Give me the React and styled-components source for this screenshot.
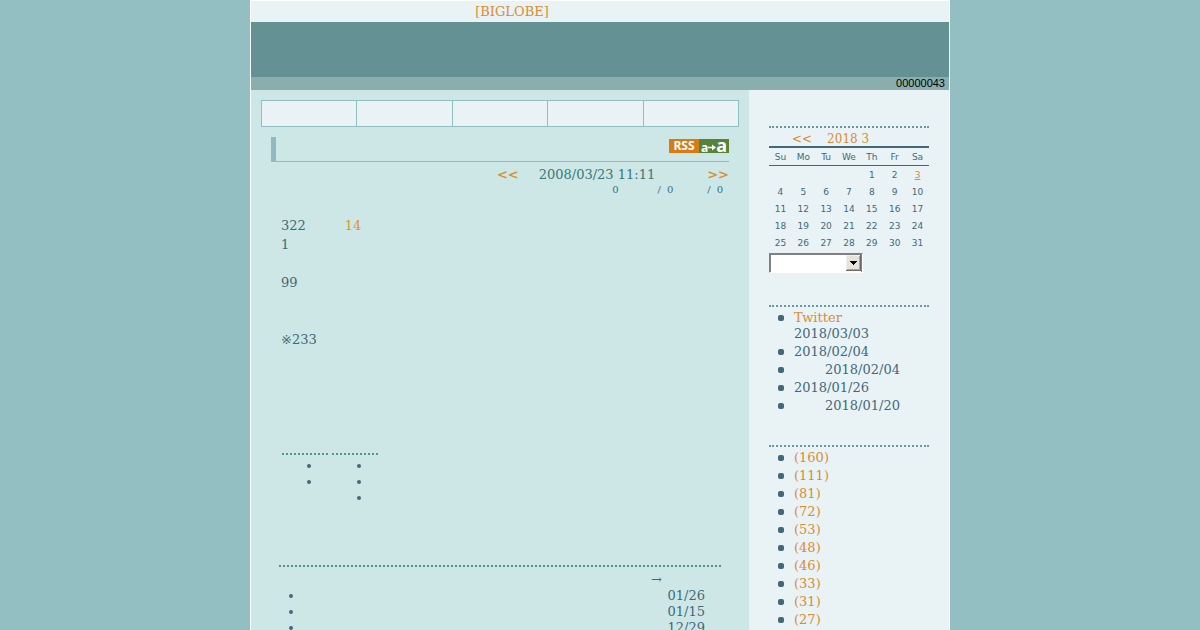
import styled, { createGlobalStyle } from 'styled-components'

const GlobalStyle = createGlobalStyle`
body {
    margin: 0;
    background: #93bfc3;
    color: #42687a;
    font-family: "DejaVu Serif", "DejaVu Sans", "Noto Sans CJK JP", serif;
    font-size: 13px;
    line-height: 16px;
}
a {
    color: #da8c30;
    text-decoration: none;
}
ul {
    margin: 0;
}
`

const Page = styled.div`
box-sizing: border-box;
max-width: 700px;
min-height: 100vh;
margin: 0 auto;
display: flex;
flex-direction: column;
border: 1px solid #fdfefe;
border-bottom: 0;
`

const TopBar = styled.div`
height: 21px;
line-height: 21px;
padding-right: 176px;
text-align: center;
background: #e9f3f6;
`

const Banner = styled.header`
height: 55px;
background: #649193;
`

const CounterBar = styled.div`
display: flex;
justify-content: flex-end;
align-items: center;
height: 13px;
padding-right: 4px;
background: #8aaeae;
`

const Counter = styled.span`
font-family: "Liberation Sans", sans-serif;
font-size: 11px;
line-height: 13px;
color: #000;
`

const Columns = styled.div`
flex: 1;
display: flex;
`

const Main = styled.main`
flex: 1;
padding: 10px;
background: #cde7e6;
`

const Side = styled.aside`
box-sizing: border-box;
width: 200px;
padding: 36px 20px 0;
background: #e9f3f6;
`

const Nav = styled.nav`
display: flex;
border: 1px solid #92bdc3;
border-left: 0;
background: #e9f3f6;
`

const NavItem = styled.a`
flex: 1;
height: 25px;
border-left: 1px solid #92bdc3;
`

const Article = styled.article`
padding: 10px 10px 0;
`

const Title = styled.div`
display: flex;
justify-content: flex-end;
height: 22px;
padding-top: 2px;
border-left: 5px solid #92b9c0;
border-bottom: 1px solid #92b9c0;
`

const Rss = styled.a`
display: flex;
width: 60px;
height: 14px;
font-family: "Open Sans", sans-serif;
font-weight: 700;
font-size: 12px;
line-height: 14px;
color: #fff;
`

const RssName = styled.span`
width: 30px;
text-align: center;
background: #d97a14;
`

const RssMode = styled.span`
flex: 1;
display: flex;
justify-content: center;
align-items: baseline;
background: #568436;
`

const Big = styled.span`
font-size: 18px;
line-height: 12px;
`

const DateLine = styled.div`
display: flex;
justify-content: flex-end;
padding-top: 5px;
color: #3c7676;
`

const Bold = styled.a`
font-weight: 700;
`

const Stamp = styled.span`
margin-left: 20px;
margin-right: 52px;
`

const Stats = styled.div`
display: flex;
justify-content: flex-end;
padding-right: 6px;
font-size: 10px;
line-height: 13px;
color: #2f7191;
`

const Stat = styled.span`
display: flex;
gap: 6px;
margin-left: ${(props) => props.$space || 0}px;
`

const Body = styled.div`
padding: 20px 10px 0;
line-height: 19px;
p {
    min-height: 19px;
    margin: 0;
}
`

const Keyword = styled.a`
margin-left: 39px;
color: #dd972a;
`

const Themes = styled.div`
display: flex;
gap: 4px;
padding: 104px 11px 0;
`

const Theme = styled.ul`
width: 6px;
padding: 3px 0 0 40px;
border-top: 2px dotted #57938f;
li {
    height: 16px;
}
`

const Related = styled.section`
margin: 59px 8px 0;
border-top: 2px dotted #57938f;
`

const More = styled.div`
padding: 5px 59px 0 0;
text-align: right;
`

const RelatedList = styled.ul`
padding: 0 16px 0 25px;
li {
    text-align: right;
}
`

const Box = styled.section`
border-top: 2px dotted #669a9d;
margin-bottom: 29px;
`

const Calendar = styled.table`
width: 100%;
table-layout: fixed;
border-collapse: collapse;
font-family: "DejaVu Sans", sans-serif;
font-size: 9px;
text-align: center;
caption {
    height: 18px;
    font-family: "DejaVu Serif", serif;
    font-size: 12px;
    line-height: 22px;
    text-align: left;
}
th {
    height: 17px;
    padding: 0;
    font-weight: 400;
    border-top: 2px solid #42687a;
    border-bottom: 1px solid #42687a;
}
td {
    height: 17px;
    padding: 0;
    line-height: 17px;
}
tbody tr:first-child td {
    padding-top: 1px;
}
td a {
    text-decoration: underline;
}
`

const Prev = styled.a`
margin-left: 23px;
margin-right: 15px;
`

const SelectWrap = styled.div`
position: relative;
width: 94px;
margin: 1px 0 32px;
`

const Select = styled.select`
appearance: none;
display: block;
box-sizing: border-box;
width: 100%;
height: 20px;
border: 1px solid;
border-color: #808080 #fff #fff #808080;
box-shadow: inset 1px 1px 0 #808080, inset -1px 0 0 #808080;
border-radius: 0;
background: #fff;
`

const Arrow = styled.svg`
position: absolute;
top: 2px;
right: 2px;
pointer-events: none;
`

const SideList = styled.ul`
padding: 3px 0 0 25px;
list-style: none;
li {
    position: relative;
    padding-bottom: 2px;
}
li::before {
    content: "";
    position: absolute;
    left: -16px;
    top: 5px;
    width: 6px;
    height: 6px;
    border-radius: 2px;
    background: #42687a;
}
`

const Indent = styled.span`
margin-left: 31px;
`

const days = ['Su', 'Mo', 'Tu', 'We', 'Th', 'Fr', 'Sa']
const weeks = [
    ['', '', '', '', 1, 2, 3],
    [4, 5, 6, 7, 8, 9, 10],
    [11, 12, 13, 14, 15, 16, 17],
    [18, 19, 20, 21, 22, 23, 24],
    [25, 26, 27, 28, 29, 30, 31],
]
const today = 3
const counts = [160, 111, 81, 72, 53, 48, 46, 33, 31, 27]
const related = ['01/26', '01/15', '12/29']
const navItems = ['nav1', 'nav2', 'nav3', 'nav4', 'nav5']

const MonthCalendar = () => (
    <Calendar>
        <caption><Prev href="#">&lt;&lt;</Prev><a href="#">2018 3</a></caption>
        <thead>
            <tr>{days.map((day) => <th key={day} scope="col">{day}</th>)}</tr>
        </thead>
        <tbody>
            {weeks.map((week, i) => (
                <tr key={i}>
                    {week.map((day, j) => (
                        <td key={j}>{day === today ? <a href="#">{day}</a> : day}</td>
                    ))}
                </tr>
            ))}
        </tbody>
    </Calendar>
)

const MonthSelect = () => (
    <SelectWrap>
        <Select aria-label="Month" defaultValue="">
            <option value=""></option>
        </Select>
        <Arrow width="15" height="16" viewBox="0 0 15 16" shapeRendering="crispEdges" aria-hidden="true">
            <rect width="15" height="16" fill="#6f6c66" />
            <rect width="14" height="15" fill="#f4f2ee" />
            <rect x="1" y="1" width="13" height="14" fill="#a8a49c" />
            <rect x="1" y="1" width="12" height="13" fill="#e6e3dd" />
            <path d="M4 6h7v1h-1v1h-1v1h-1v1h-1v-1h-1v-1h-1v-1h-1z" fill="#000" />
        </Arrow>
    </SelectWrap>
)

const App = () => {
    return (
        <>
            <GlobalStyle />
            <Page>
                <TopBar><a href="#">[BIGLOBE]</a></TopBar>
                <Banner />
                <CounterBar><Counter>00000043</Counter></CounterBar>
                <Columns>
                    <Main>
                        <Nav>
                            {navItems.map((item) => <NavItem key={item} href="#" aria-label={item} />)}
                        </Nav>
                        <Article>
                            <Title>
                                <Rss href="#">
                                    <RssName>RSS</RssName>
                                    <RssMode>
                                        a
                                        <svg width="8" height="8" viewBox="0 0 8 8" aria-hidden="true">
                                            <path d="M0 2.8h4V.5l4 3-4 3V4.2H0z" fill="#fff" />
                                        </svg>
                                        <Big>a</Big>
                                    </RssMode>
                                </Rss>
                            </Title>
                            <DateLine>
                                <Bold href="#">&lt;&lt;</Bold>
                                <Stamp>2008/03/23 11:11</Stamp>
                                <Bold href="#">&gt;&gt;</Bold>
                            </DateLine>
                            <Stats>
                                <Stat>0</Stat>
                                <Stat $space={39}><span>/</span>0</Stat>
                                <Stat $space={34}><span>/</span>0</Stat>
                            </Stats>
                            <Body>
                                <p>322<Keyword href="#">14</Keyword></p>
                                <p>1</p>
                                <p />
                                <p>99</p>
                                <p />
                                <p />
                                <p>※233</p>
                            </Body>
                            <Themes>
                                <Theme>
                                    <li />
                                    <li />
                                </Theme>
                                <Theme>
                                    <li />
                                    <li />
                                    <li />
                                </Theme>
                            </Themes>
                            <Related>
                                <More>→</More>
                                <RelatedList>
                                    {related.map((date) => <li key={date}>{date}</li>)}
                                </RelatedList>
                            </Related>
                        </Article>
                    </Main>
                    <Side>
                        <Box>
                            <MonthCalendar />
                            <MonthSelect />
                        </Box>
                        <Box>
                            <SideList>
                                <li><a href="#">Twitter</a><br />2018/03/03</li>
                                <li>2018/02/04</li>
                                <li><Indent>2018/02/04</Indent></li>
                                <li>2018/01/26</li>
                                <li><Indent>2018/01/20</Indent></li>
                            </SideList>
                        </Box>
                        <Box>
                            <SideList>
                                {counts.map((count) => <li key={count}><a href="#">({count})</a></li>)}
                            </SideList>
                        </Box>
                    </Side>
                </Columns>
            </Page>
        </>
    )
}

export default App
